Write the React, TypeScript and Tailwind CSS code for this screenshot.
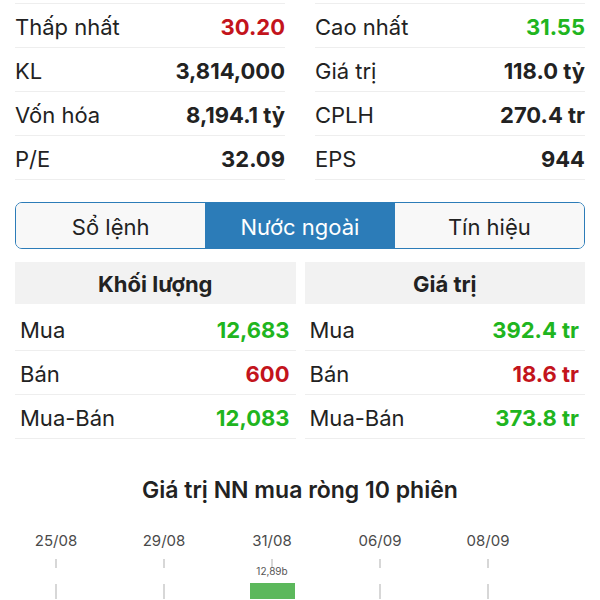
const stats: [string, string, string?][][] = [
  [
    ["Thấp nhất", "30.20", "text-[#c3141c]"],
    ["KL", "3,814,000"],
    ["Vốn hóa", "8,194.1 tỷ"],
    ["P/E", "32.09"],
  ],
  [
    ["Cao nhất", "31.55", "text-[#1fb520]"],
    ["Giá trị", "118.0 tỷ"],
    ["CPLH", "270.4 tr"],
    ["EPS", "944"],
  ],
];

const foreign = [
  {
    title: "Khối lượng",
    rows: [
      ["Mua", "12,683", "text-[#1fb520]"],
      ["Bán", "600", "text-[#c3141c]"],
      ["Mua-Bán", "12,083", "text-[#1fb520]"],
    ],
  },
  {
    title: "Giá trị",
    rows: [
      ["Mua", "392.4 tr", "text-[#1fb520]"],
      ["Bán", "18.6 tr", "text-[#c3141c]"],
      ["Mua-Bán", "373.8 tr", "text-[#1fb520]"],
    ],
  },
];

const tabs = ["Sổ lệnh", "Nước ngoài", "Tín hiệu"];
const dates = ["25/08", "29/08", "31/08", "06/09", "08/09"];

function NetChart() {
  return (
    <svg width="600" height="95" viewBox="0 0 600 95" className="block">
      {dates.map((d, i) => {
        const x = 56 + i * 108;
        return (
          <g key={d}>
            <text
              x={x}
              y={42}
              textAnchor="middle"
              fontSize="15"
              fill="#4a4a4a"
              fontFamily="Inter, sans-serif"
            >
              {d}
            </text>
            <line x1={x} y1={55} x2={x} y2={64} stroke="#bdbdbd" strokeWidth="1.2" />
            <line x1={x} y1={80} x2={x} y2={95} stroke="#bdbdbd" strokeWidth="1.2" />
          </g>
        );
      })}
      <text
        x={272}
        y={71}
        textAnchor="middle"
        fontSize="10"
        fill="#555"
        fontFamily="Inter, sans-serif"
      >
        12,89b
      </text>
      <rect x={250} y={79} width={45} height={16} fill="#5cb85c" />
    </svg>
  );
}

export default function App() {
  return (
    <div className="h-[600px] w-[600px] overflow-hidden bg-white font-[Inter,sans-serif] text-[#222]">
      <div className="grid grid-cols-2 gap-x-[30px] px-[15px] pt-[3px]">
        {stats.map((col, ci) => (
          <div key={ci} className="border-t border-[#eeeeee]">
            {col.map(([label, value, color]) => (
              <div
                key={label}
                className="flex h-[44px] items-center justify-between border-b border-[#eeeeee] pt-[4px]"
              >
                <span className="text-[22px]">{label}</span>
                <span className={`text-[22px] font-bold ${color ?? "text-[#222]"}`}>
                  {value}
                </span>
              </div>
            ))}
          </div>
        ))}
      </div>

      <div className="mx-[15px] mt-[22px] flex h-[47px] overflow-hidden rounded-[7px] border border-[#2c7cb8]">
        {tabs.map((t, i) => (
          <div
            key={t}
            className={
              i === 1
                ? "flex flex-1 items-center justify-center bg-[#2c7cb8] pt-[3px] text-[22px] text-white"
                : "flex flex-1 items-center justify-center bg-[#f8f8f8] pt-[3px] text-[22px] text-[#222]"
            }
          >
            {t}
          </div>
        ))}
      </div>

      <div className="mt-[13px] grid grid-cols-2 gap-x-[9px] px-[15px]">
        {foreign.map((tbl) => (
          <div key={tbl.title}>
            <div className="flex h-[42px] items-center justify-center bg-[#f2f2f2] pt-[3px] text-[22px] font-bold">
              {tbl.title}
            </div>
            <div className="mt-[3px]">
              {tbl.rows.map(([label, value, color]) => (
                <div
                  key={label}
                  className="flex h-[44px] items-center justify-between border-b border-[#eeeeee] pr-[6px] pl-[5px] pt-[4px]"
                >
                  <span className="text-[22px]">{label}</span>
                  <span className={`text-[22px] font-bold ${color}`}>{value}</span>
                </div>
              ))}
            </div>
          </div>
        ))}
      </div>

      <div className="mt-[37px] h-[28px] text-center text-[23px] leading-[28px] font-semibold">
        Giá trị NN mua ròng 10 phiên
      </div>
      <NetChart />
    </div>
  );
}
